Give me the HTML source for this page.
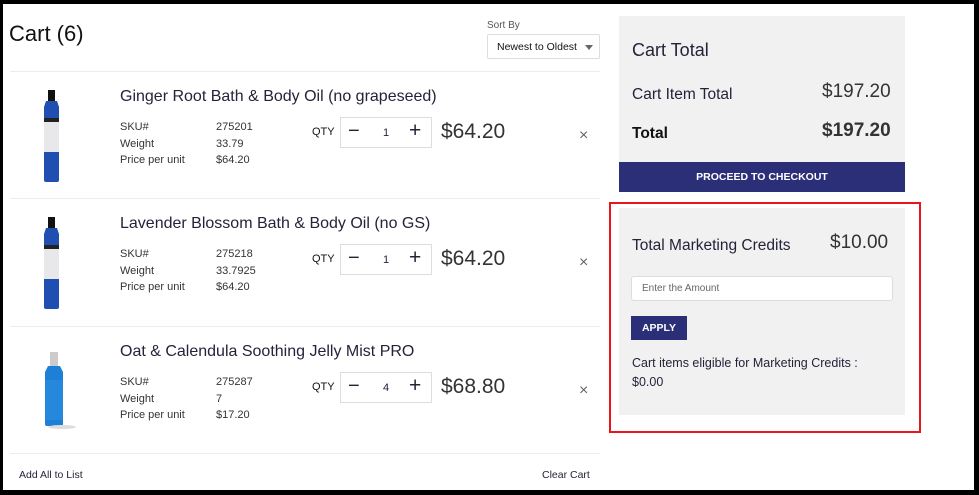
<!DOCTYPE html>
<html><head><style>
*{margin:0;padding:0;box-sizing:border-box}
body{width:979px;height:495px;background:#000;position:relative;overflow:hidden;font-family:"Liberation Sans",sans-serif;color:#23233a}
.page{position:absolute;left:3px;top:4px;width:971px;height:486px;background:#fff}
.a{position:absolute;white-space:nowrap}
.hr{position:absolute;left:10px;width:590px;height:1px;background:#ececec}
.t{font-size:16px}
.s{font-size:11px;color:#333}
.qb{position:absolute;width:92px;height:31px;border:1px solid #ddd;background:#fff}
.p{font-size:21px;color:#333}
</style></head><body>
<div class="page"></div>
<div class="a" style="left:9px;top:21px;font-size:22px;color:#111">Cart (6)</div>
<div class="a" style="left:487px;top:20px;font-size:10px;color:#555">Sort By</div>
<div class="a" style="left:487px;top:34px;width:113px;height:25px;border:1px solid #ddd;border-radius:2px;font-size:10.5px;padding:6px 0 0 9px;color:#111">Newest to Oldest<span style="position:absolute;right:6px;top:10px;border:4px solid transparent;border-top:5px solid #666"></span></div>
<div class="hr" style="top:71px"></div>
<div class="hr" style="top:198px"></div>
<div class="hr" style="top:326px"></div>
<div class="hr" style="top:453px"></div>

<!-- row 1 -->
<svg class="a" style="left:36px;top:88px" width="30" height="96"><rect x="12" y="2" width="7" height="11" fill="#111"/><path d="M10 13h11l2 6v73q0 2-2 2H10q-2 0-2-2V19z" fill="#1f4fb0"/><rect x="8" y="30" width="15" height="4" fill="#222"/><rect x="8" y="34" width="15" height="30" fill="#e8e8ea"/></svg>
<div class="a t" style="left:120px;top:88px">Ginger Root Bath &amp; Body Oil (no grapeseed)</div>
<div class="a s" style="left:120px;top:119px;line-height:16.5px">SKU#<br>Weight<br>Price per unit</div>
<div class="a s" style="left:216px;top:119px;line-height:16.5px">275201<br>33.79<br>$64.20</div>
<div class="a s" style="left:312px;top:126px;color:#111">QTY</div>
<div class="qb" style="left:340px;top:117px"><span class="a" style="left:7px;top:2px;font-size:20px">−</span><span class="a" style="left:42px;top:9px;font-size:11px">1</span><span class="a" style="left:68px;top:1px;font-size:21px">+</span></div>
<div class="a p" style="left:441px;top:120px">$64.20</div>
<div class="a" style="left:579px;top:127px;font-size:16px;color:#666">×</div>

<!-- row 2 -->
<svg class="a" style="left:36px;top:215px" width="30" height="96"><rect x="12" y="2" width="7" height="11" fill="#111"/><path d="M10 13h11l2 6v73q0 2-2 2H10q-2 0-2-2V19z" fill="#1f4fb0"/><rect x="8" y="30" width="15" height="4" fill="#222"/><rect x="8" y="34" width="15" height="30" fill="#e8e8ea"/></svg>
<div class="a t" style="left:120px;top:215px">Lavender Blossom Bath &amp; Body Oil (no GS)</div>
<div class="a s" style="left:120px;top:246px;line-height:16.5px">SKU#<br>Weight<br>Price per unit</div>
<div class="a s" style="left:216px;top:246px;line-height:16.5px">275218<br>33.7925<br>$64.20</div>
<div class="a s" style="left:312px;top:253px;color:#111">QTY</div>
<div class="qb" style="left:340px;top:244px"><span class="a" style="left:7px;top:2px;font-size:20px">−</span><span class="a" style="left:42px;top:9px;font-size:11px">1</span><span class="a" style="left:68px;top:1px;font-size:21px">+</span></div>
<div class="a p" style="left:441px;top:247px">$64.20</div>
<div class="a" style="left:579px;top:254px;font-size:16px;color:#666">×</div>

<!-- row 3 -->
<svg class="a" style="left:36px;top:350px" width="44" height="80"><rect x="14" y="2" width="8" height="14" fill="#ccc"/><path d="M12 16h12l3 6v52q0 2-2 2H11q-2 0-2-2V22z" fill="#1e7fd6"/><rect x="9" y="30" width="18" height="40" fill="#2a8ee0" opacity=".6"/><ellipse cx="26" cy="77" rx="14" ry="2" fill="#ddd"/></svg>
<div class="a t" style="left:120px;top:343px">Oat &amp; Calendula Soothing Jelly Mist PRO</div>
<div class="a s" style="left:120px;top:374px;line-height:16.5px">SKU#<br>Weight<br>Price per unit</div>
<div class="a s" style="left:216px;top:374px;line-height:16.5px">275287<br>7<br>$17.20</div>
<div class="a s" style="left:312px;top:381px;color:#111">QTY</div>
<div class="qb" style="left:340px;top:372px"><span class="a" style="left:7px;top:2px;font-size:20px">−</span><span class="a" style="left:42px;top:9px;font-size:11px">4</span><span class="a" style="left:68px;top:1px;font-size:21px">+</span></div>
<div class="a p" style="left:441px;top:375px">$68.80</div>
<div class="a" style="left:579px;top:382px;font-size:16px;color:#666">×</div>

<div class="a" style="left:19px;top:469px;font-size:10.5px">Add All to List</div>
<div class="a" style="left:542px;top:469px;font-size:10.5px">Clear Cart</div>

<!-- right -->
<div class="a" style="left:619px;top:16px;width:286px;height:146px;background:#f1f1f1"></div>
<div class="a" style="left:632px;top:40px;font-size:18px">Cart Total</div>
<div class="a" style="left:632px;top:86px;font-size:15.5px">Cart Item Total</div>
<div class="a" style="left:822px;top:81px;font-size:19px;color:#333">$197.20</div>
<div class="a" style="left:632px;top:125px;font-size:15.5px;font-weight:bold;color:#111">Total</div>
<div class="a" style="left:822px;top:120px;font-size:19px;font-weight:bold;color:#333">$197.20</div>
<div class="a" style="left:619px;top:162px;width:286px;height:30px;background:#2b2f78;color:#fff;font-size:10.5px;font-weight:bold;text-align:center;line-height:30px">PROCEED TO CHECKOUT</div>

<div class="a" style="left:609px;top:202px;width:312px;height:231px;border:2px solid #e8151b"></div>
<div class="a" style="left:619px;top:208px;width:286px;height:207px;background:#f1f1f1"></div>
<div class="a" style="left:632px;top:237px;font-size:15.5px">Total Marketing Credits</div>
<div class="a" style="left:830px;top:232px;font-size:19px;color:#333">$10.00</div>
<div class="a" style="left:631px;top:276px;width:262px;height:25px;background:#fff;border:1px solid #ddd;border-radius:3px;font-size:10px;color:#666;padding:6px 0 0 10px">Enter the Amount</div>
<div class="a" style="left:631px;top:316px;width:56px;height:24px;background:#2b2f78;color:#fff;font-size:10.5px;font-weight:bold;text-align:center;line-height:24px">APPLY</div>
<div class="a" style="left:632px;top:354px;font-size:12.5px;line-height:19px">Cart items eligible for Marketing Credits :<br>$0.00</div>
</body></html>
